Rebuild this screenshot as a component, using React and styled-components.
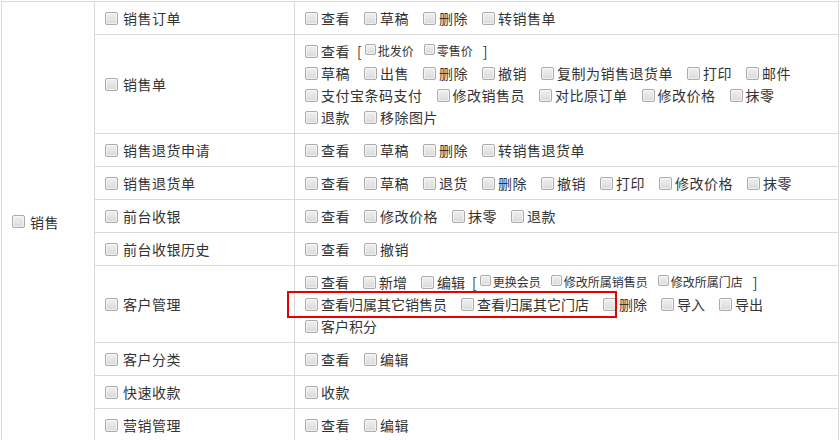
import styled, { createGlobalStyle } from 'styled-components';

const GlobalStyle = createGlobalStyle`
    html, body {
        margin: 0;
        padding: 0;
        background: #fff;
    }
    body {
        font-family: "Noto Sans CJK SC", "Microsoft YaHei", sans-serif;
        font-size: 14px;
        color: #333;
    }
`;

const Page = styled.div`
    padding: 1px 0 0 1px;
    width: 838px;
`;

const Table = styled.table`
    width: 838px;
    table-layout: fixed;
    border-collapse: collapse;
    td {
        border: 1px solid #d9d9d9;
        padding: 5px 6px;
        vertical-align: middle;
    }
`;

const Checkbox = styled.input.attrs({ type: 'checkbox' })`
    appearance: none;
    flex: none;
    width: ${p => p.$small ? 11 : 13}px;
    height: ${p => p.$small ? 11 : 13}px;
    margin: ${p => p.$small ? '0 2px 3px 3px' : '0 3px 0 4px'};
    border: 1px solid #ababab;
    border-radius: 2px;
    background: linear-gradient(#f0f0f0, #dadada);
    box-shadow: inset 0 0 0 1px rgba(255, 255, 255, 0.55);
`;

const Label = styled.label`
    display: inline-flex;
    align-items: center;
    white-space: nowrap;
    margin-right: ${p => p.$gap}px;
    font-size: ${p => p.$small ? 12 : 14}px;
    letter-spacing: ${p => p.$tight || p.$small ? 0 : 0.5}px;
    line-height: 22px;
`;

const GroupName = styled(Label)`
    ${Checkbox} {
        margin-right: 5px;
    }
`;

const Line = styled.div`
    display: flex;
    align-items: center;
    height: 22px;
    white-space: nowrap;
`;

const BracketGroup = styled.span`
    display: inline-flex;
    align-items: center;
`;

const Bracket = styled.span`
    font-size: 14px;
    margin: ${p => p.$open ? '0 0 0 -3px' : '0 0 0 3px'};
`;

const Highlight = styled.span`
    position: relative;
    display: inline-flex;
    align-items: center;
    &::after {
        content: '';
        position: absolute;
        top: -2px;
        bottom: -3px;
        left: -14px;
        right: -18px;
        border: 2px solid #e60000;
        pointer-events: none;
    }
`;

const rows = [
    { name: '销售订单', lines: [['查看', '草稿', '删除', '转销售单']] },
    {
        name: '销售单',
        lines: [
            ['查看', { bracket: ['批发价', '零售价'] }],
            ['草稿', '出售', '删除', '撤销', '复制为销售退货单', '打印', '邮件'],
            ['支付宝条码支付', '修改销售员', '对比原订单', '修改价格', '抹零'],
            ['退款', '移除图片'],
        ],
    },
    { name: '销售退货申请', lines: [['查看', '草稿', '删除', '转销售退货单']] },
    { name: '销售退货单', lines: [['查看', '草稿', '退货', '删除', '撤销', '打印', '修改价格', '抹零']] },
    { name: '前台收银', lines: [['查看', '修改价格', '抹零', '退款']] },
    { name: '前台收银历史', lines: [['查看', '撤销']] },
    {
        name: '客户管理',
        tight: true,
        lines: [
            ['查看', '新增', '编辑', { bracket: ['更换会员', '修改所属销售员', '修改所属门店'] }],
            [{ highlight: ['查看归属其它销售员', '查看归属其它门店'] }, '删除', '导入', '导出'],
            ['客户积分'],
        ],
    },
    { name: '客户分类', lines: [['查看', '编辑']] },
    { name: '快速收款', lines: [['收款']] },
    { name: '营销管理', lines: [['查看', '编辑']] },
];

const Item = ({ text, tight }) => (
    <Label $gap={10} $tight={tight}>
        <Checkbox />
        {text}
    </Label>
);

const renderPart = tight => (part, i) => {
    if (typeof part === 'string') return <Item key={i} text={part} tight={tight} />;
    if (part.bracket) {
        return (
            <BracketGroup key={i}>
                <Bracket $open>[</Bracket>
                {part.bracket.map(t => (
                    <Label key={t} $small $gap={7}>
                        <Checkbox $small />
                        {t}
                    </Label>
                ))}
                <Bracket>]</Bracket>
            </BracketGroup>
        );
    }
    return (
        <Highlight key={i}>
            {part.highlight.map(t => <Item key={t} text={t} tight />)}
        </Highlight>
    );
};

const App = () => {
    return (
        <Page>
            <GlobalStyle />
            <Table>
                <colgroup>
                    <col style={{ width: 93 }} />
                    <col style={{ width: 200 }} />
                    <col />
                </colgroup>
                <tbody>
                    {rows.map((r, i) => (
                        <tr key={r.name}>
                            {i === 0 && (
                                <td rowSpan={rows.length}>
                                    <GroupName>
                                        <Checkbox />
                                        销售
                                    </GroupName>
                                </td>
                            )}
                            <td>
                                <GroupName>
                                    <Checkbox />
                                    {r.name}
                                </GroupName>
                            </td>
                            <td>
                                {r.lines.map((line, j) => (
                                    <Line key={j}>{line.map(renderPart(r.tight))}</Line>
                                ))}
                            </td>
                        </tr>
                    ))}
                </tbody>
            </Table>
        </Page>
    );
};

export default App;
